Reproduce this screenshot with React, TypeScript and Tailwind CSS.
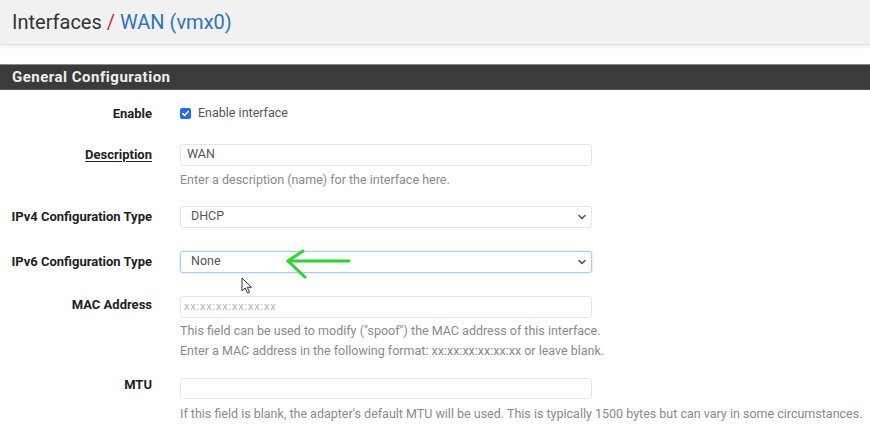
import React from 'react';

const Chevron = () => (
  <svg className="absolute right-[5px] top-1/2 -translate-y-1/2 w-[10px] h-[10px] text-[#555]" viewBox="0 0 10 10" fill="none" stroke="currentColor" strokeWidth={1.6}>
    <path d="M2 3.5l3 3 3-3" strokeLinecap="round" strokeLinejoin="round" />
  </svg>
);

const Label: React.FC<{ text: string; underline?: boolean; h: string }> = ({ text, underline, h }) => (
  <div className={`w-[152px] shrink-0 flex items-center justify-end text-[13px] font-bold text-[#222] whitespace-nowrap ${h}`}>
    <span className={underline ? 'underline underline-offset-2' : ''}>{text}</span>
  </div>
);

const App: React.FC = () => {
  return (
    <div className="w-[870px] h-[431px] overflow-hidden bg-white" style={{ fontFamily: 'Roboto, "Liberation Sans", sans-serif' }}>
      <div className="h-[45px] bg-[#f1f1f1] border-b border-[#e2e2e2] shadow-[0_2px_3px_rgba(0,0,0,0.08)] flex items-center px-[12px]">
        <h1 className="text-[20px] text-[#333] leading-none">
          Interfaces <span className="text-[#c4302b]">/</span>{' '}
          <span className="text-[#2f73b8]">WAN (vmx0)</span>
        </h1>
      </div>

      <div className="mt-[19px] h-[26px] bg-[#3b3b3b] border-t border-[#8a8a8a] border-b border-b-[#555] flex items-center px-[12px]">
        <span className="text-[15px] font-bold text-[#f0f0f0] tracking-[0.5px]">General Configuration</span>
      </div>

      <div className="relative pt-[14px]">
        <div className="flex items-center">
          <Label text="Enable" h="h-[18px]" />
          <div className="ml-[28px] flex items-center gap-[7px]">
            <span className="w-[11px] h-[11px] rounded-[2px] bg-[#1f6fe0] flex items-center justify-center">
              <svg viewBox="0 0 10 10" className="w-[9px] h-[9px]" fill="none" stroke="white" strokeWidth={1.8}>
                <path d="M2 5.2l2 2 4-4.4" strokeLinecap="round" strokeLinejoin="round" />
              </svg>
            </span>
            <span className="text-[12.5px] text-[#555]">Enable interface</span>
          </div>
        </div>

        <div className="flex mt-[21px]">
          <Label text="Description" underline h="h-[22px]" />
          <div className="ml-[28px] w-[412px]">
            <div className="h-[22px] border border-[#e6e6e6] rounded-[3px] flex items-center px-[6px] text-[12.5px] text-[#555]">WAN</div>
            <div className="mt-[6px] leading-[16px] text-[12.5px] text-[#8a8a8a] whitespace-nowrap">Enter a description (name) for the interface here.</div>
          </div>
        </div>

        <div className="flex mt-[18px]">
          <Label text="IPv4 Configuration Type" h="h-[22px]" />
          <div className="ml-[28px] w-[412px] relative">
            <div className="h-[22px] border border-[#e6e6e6] rounded-[3px] flex items-center px-[10px] text-[12.5px] text-[#555]">DHCP</div>
            <Chevron />
          </div>
        </div>

        <div className="flex mt-[23px]">
          <Label text="IPv6 Configuration Type" h="h-[22px]" />
          <div className="ml-[28px] w-[412px] relative">
            <div className="h-[22px] border border-[#a9cdea] rounded-[3px] shadow-[0_0_2px_rgba(100,160,220,0.5)] flex items-center px-[10px] text-[12.5px] text-[#555]">None</div>
            <Chevron />
          </div>
        </div>

        <div className="flex mt-[23px]">
          <Label text="MAC Address" h="h-[18px]" />
          <div className="ml-[28px] w-[412px]">
            <div className="h-[22px] border border-[#e6e6e6] rounded-[3px] flex items-center px-[3px] text-[11px] tracking-[0.8px] text-[#b5b5b5]">xx:xx:xx:xx:xx:xx</div>
            <div className="mt-[3px] leading-[20px] text-[12.5px] text-[#8a8a8a] whitespace-nowrap">
              <div>This field can be used to modify ("spoof") the MAC address of this interface.</div>
              <div>Enter a MAC address in the following format: xx:xx:xx:xx:xx:xx or leave blank.</div>
            </div>
          </div>
        </div>

        <div className="flex mt-[17px]">
          <Label text="MTU" h="h-[14px]" />
          <div className="ml-[28px] w-[412px]">
            <div className="h-[21px] border border-[#e6e6e6] rounded-[3px]" />
            <div className="mt-[5px] leading-[20px] text-[12.5px] text-[#8a8a8a] whitespace-nowrap">
              If this field is blank, the adapter's default MTU will be used. This is typically 1500 bytes but can vary in some circumstances.
            </div>
          </div>
        </div>

        <svg className="absolute left-[284px] top-[158px] w-[70px] h-[32px]" viewBox="0 0 70 32" fill="none" stroke="#2bd42b" strokeWidth={3} strokeLinecap="round" strokeLinejoin="round">
          <path d="M4 13H65" />
          <path d="M19 3L4 13l17 16" />
        </svg>

        <svg className="absolute left-[241px] top-[187px] w-[13px] h-[18px]" viewBox="0 0 13 18">
          <path d="M1 1v13l3.2-3 2.3 5.2 2-0.9-2.2-5H10.5z" fill="white" stroke="#333" strokeWidth={1} strokeLinejoin="round" />
        </svg>
      </div>
    </div>
  );
};

export default App;
